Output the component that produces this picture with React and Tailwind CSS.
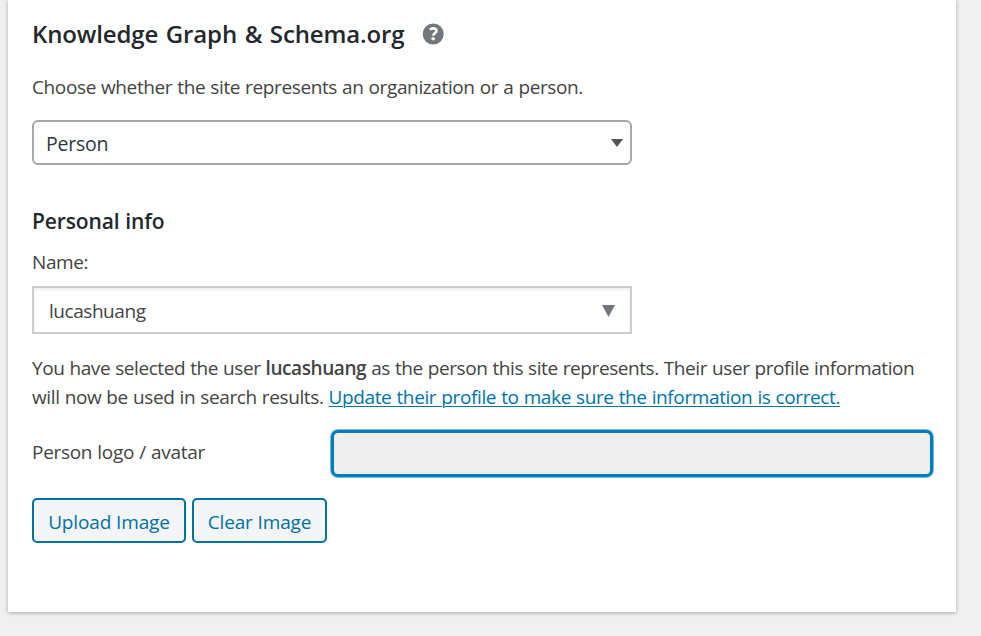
function HelpIcon() {
  return (
    <svg width="22" height="22" viewBox="0 0 22 22" aria-hidden="true">
      <circle cx="11.2" cy="11" r="10.5" fill="#72777c" />
      <path d="M7.8 6.5C9 5.8 10.1 5.4 11.3 5.4c2 0 3.2 .9 3.2 2.4 0 2.4-3.2 2.2-3.2 4.9" fill="none" stroke="#fff" strokeWidth="2.6" />
      <rect x="9.5" y="14.2" width="3.4" height="3" rx="1" fill="#fff" />
    </svg>
  );
}

export default function App() {
  return (
    <div className="h-[636px] w-[981px] overflow-hidden bg-[#f0f0f0] pl-2 font-['Open_Sans','Noto_Sans',sans-serif] text-[19px] tracking-[-0.38px] text-[#444] [word-spacing:0.5px]">
      <main className="flex h-[612px] w-[948px] flex-col items-start bg-white px-6 pt-[18px] shadow-[0_1px_4px_rgba(0,0,0,0.3)]">
        <div className="flex h-8 items-center gap-[18px]">
          <h2 className="w-[372px] whitespace-nowrap text-[24px] leading-8 font-semibold tracking-[-0.13px] text-[#23282d] [word-spacing:1.5px]">
            <span>Knowledge Graph &amp; Schema.org</span>
          </h2>
          <HelpIcon />
        </div>
        <p className="mt-[23px] whitespace-nowrap leading-7">
          Choose whether the site represents an organization or a person.
        </p>
        <div className="mt-[19px] flex h-[45px] w-[600px] items-center justify-between rounded-[6px] border-2 border-[#a7a7a7] pr-[7px] pl-3 text-[19.5px] text-[#32373c]">
          <span className="pt-[3px] tracking-[-0.25px]">Person</span>
          <svg width="12" height="8" viewBox="0 0 12 8"><path d="M0 0h12L6 8z" fill="#555" /></svg>
        </div>
        <h3 className="mt-[42px] whitespace-nowrap text-[21px] leading-7 font-semibold tracking-[-0.13px] text-[#23282d]">Personal info</h3>
        <p className="mt-[13px] leading-7">Name:</p>
        <div className="mt-[10px] flex h-12 w-[600px] items-center justify-between border-2 border-[#ccc] pr-[15px] pl-[15px] shadow-[inset_0_2px_3px_rgba(0,0,0,0.07)]">
          <span className="pt-[2px] tracking-[-0.45px]">lucashuang</span>
          <svg width="13" height="12" viewBox="0 0 13 12" className="mt-[2px]"><path d="M0 0h13L6.5 12z" fill="#72777c" /></svg>
        </div>
        <p className="mt-[20px] whitespace-nowrap leading-[29px]">
          <span className="tracking-[-0.42px]">You have selected the user <b className="font-semibold">lucashuang</b> as the person this site represents. Their user profile information</span>
          <br />
          <span>will now be used in search results. </span>
          <a className="text-[#0073aa] underline decoration-1 underline-offset-2">Update their profile to make sure the information is correct.</a>
        </p>
        <div className="mt-[18px] flex h-[47px]">
          <span className="w-[299px] shrink-0 leading-[44px] tracking-[-0.3px]">Person logo / avatar</span>
          <span className="h-[47px] w-[602px] shrink-0 rounded-[7px] border-3 border-[#007cba] bg-[#eee] shadow-[0_0_0_1px_rgba(0,124,186,0.5)]" />
        </div>
        <div className="mt-[21px] flex gap-[6px] text-[#0071a1] tracking-[-0.13px]">
          <button className="h-[45px] w-[154px] rounded-[5px] border-2 border-[#0071a1] bg-[#f3f5f6] pt-[4px] whitespace-nowrap">Upload Image</button>
          <button className="h-[45px] w-[135px] rounded-[5px] border-2 border-[#0071a1] bg-[#f3f5f6] pt-[4px] whitespace-nowrap">Clear Image</button>
        </div>
      </main>
    </div>
  );
}
